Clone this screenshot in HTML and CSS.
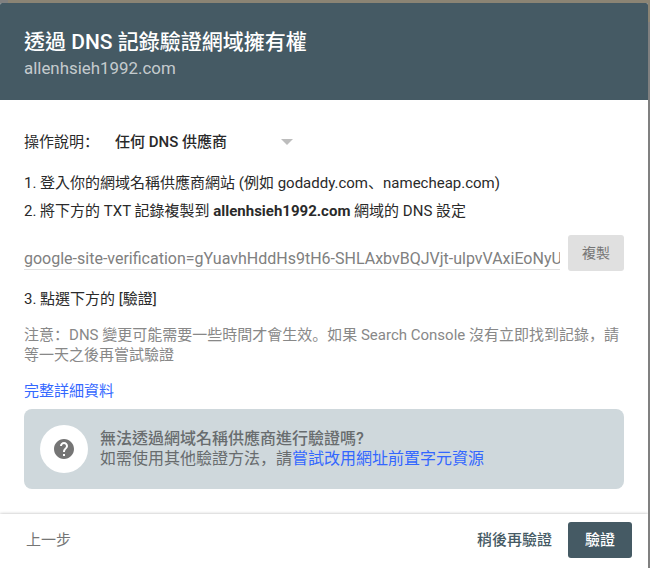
FILE: index.html
```
<!DOCTYPE html>
<html lang="zh-Hant">
<head>
<meta charset="utf-8">
<title>透過 DNS 記錄驗證網域擁有權</title>
<link rel="stylesheet" href="styles.css">
</head>
<body>
<main class="dialog">
  <header class="header">
    <h1 class="title">透過 DNS 記錄驗證網域擁有權</h1>
    <div class="domain">allenhsieh1992.com</div>
  </header>
  <section class="content">
    <div class="provider">
      <span class="provider-label">操作說明<span class="punct" lang="zh-Hans">：</span></span>
      <div class="select"><span>任何 DNS 供應商</span><span class="arrow"></span></div>
    </div>
    <p class="step">1. 登入你的網域名稱供應商網站 (例如 godaddy.com<span class="punct" lang="zh-Hans">、</span>namecheap.com)</p>
    <p class="step second">2. 將下方的 TXT 記錄複製到 <b>allenhsieh1992.com</b> 網域的 DNS 設定</p>
    <div class="record">
      <div class="record-value">google-site-verification=gYuavhHddHs9tH6-SHLAxbvBQJVjt-ulpvVAxiEoNyU</div>
      <button class="button copy">複製</button>
    </div>
    <p class="step third">3. 點選下方的 [驗證]</p>
    <p class="note">注意<span class="punct" lang="zh-Hans">：</span>DNS 變更可能需要一些時間才會生效<span class="punct" lang="zh-Hans">。</span>如果 Search Console 沒有立即找到記錄<span class="punct" lang="zh-Hans">，</span>請<br>等一天之後再嘗試驗證</p>
    <a class="details">完整詳細資料</a>
    <aside class="help">
      <div class="help-icon"><svg width="24" height="24" viewBox="0 0 24 24"><path fill="#757575" d="M12 2C6.48 2 2 6.48 2 12s4.48 10 10 10 10-4.480 10-10S17.520 2 12 2zm1 17h-2v-2h2v2zm2.070-7.750l-.9.920C13.450 12.900 13 13.500 13 15h-2v-.5c0-1.100.45-2.100 1.170-2.830l1.240-1.260c.37-.36.59-.86.59-1.410 0-1.100-.9-2-2-2s-2 .9-2 2H8c0-2.210 1.790-4 4-4s4 1.790 4 4c0 .88-.36 1.680-.93 2.250z"/></svg></div>
      <div class="help-text">
        <div class="help-title">無法透過網域名稱供應商進行驗證嗎?</div>
        <div>如需使用其他驗證方法<span class="punct" lang="zh-Hans">，</span>請<a>嘗試改用網址前置字元資源</a></div>
      </div>
    </aside>
  </section>
  <footer class="footer">
    <button class="button back">上一步</button>
    <button class="button later">稍後再驗證</button>
    <button class="button verify">驗證</button>
  </footer>
</main>
</body>
</html>
```
FILE: styles.css
```
* { box-sizing: border-box; }
body {
  margin: 0;
  height: 568px;
  overflow: hidden;
  padding-top: 3px;
  background: linear-gradient(#8b8474, #8b8474) 8px 0 / 650px 22px no-repeat, #808080;
  color: #2a2a2a;
  font: 15px/20px Roboto, "Noto Sans CJK TC", sans-serif;
}
h1, p { margin: 0; }
a { color: #3367ff; }
.punct { font-family: "Noto Sans CJK SC", sans-serif; line-height: 0; }
.dialog {
  display: flex;
  flex-direction: column;
  width: 648px;
  height: 565px;
  border-radius: 2px 2px 0 0;
  overflow: hidden;
  background: #fff;
}
.header {
  height: 97px;
  padding: 25px 24px 0;
  background: #455a64;
}
.title {
  font-size: 21px;
  font-weight: 500;
  line-height: 28px;
  color: #fff;
  white-space: nowrap;
}
.domain {
  font-size: 16.9px;
  line-height: 24px;
  color: rgba(255, 255, 255, .7);
}
.content {
  flex: 1;
  padding: 32px 24px 0;
}
.provider { display: flex; }
.provider-label { width: 91px; white-space: nowrap; }
.select {
  display: flex;
  align-items: center;
  justify-content: space-between;
  width: 178px;
  font-weight: 500;
}
.arrow {
  border: solid transparent;
  border-width: 6px 6px 0;
  border-top-color: #bdbdbd;
}
.step { margin-top: 21px; white-space: nowrap; }
.second { margin-top: 8px; }
.record {
  display: flex;
  margin-top: 14px;
  gap: 8px;
}
.record-value {
  width: 536px;
  height: 35px;
  padding-top: 14px;
  border-bottom: 1px solid #e0e0e0;
  overflow: hidden;
  white-space: nowrap;
  font-size: 16px;
  color: #808080;
}
.button {
  height: 36px;
  padding: 0;
  border: 0;
  border-radius: 3px;
  background: none;
  font: inherit;
}
.copy {
  width: 56px;
  background: #e0e0e0;
  color: #757575;
  font-size: 14px;
}
.third { margin-top: 18px; }
.note { margin-top: 16px; color: #888; white-space: nowrap; }
.details { display: block; margin-top: 16px; }
.help {
  display: flex;
  align-items: center;
  gap: 12px;
  height: 80px;
  margin-top: 8px;
  padding: 0 16px;
  border-radius: 8px;
  background: #cfd8dc;
  color: #686c6e;
  font-size: 16px;
}
.help-icon {
  display: grid;
  place-items: center;
  width: 48px;
  height: 48px;
  border-radius: 50%;
  background: #fff;
}
.help-title { font-weight: 500; }
.footer {
  display: flex;
  align-items: center;
  height: 54px;
  padding: 0 16px 2px 26px;
  box-shadow: 0 0 3px rgba(0, 0, 0, .3);
}
.back { margin-right: auto; color: #757575; }
.later { margin-right: 16px; color: #455a64; font-weight: 500; }
.verify {
  width: 64px;
  background: #455a64;
  color: #fff;
  font-weight: 500;
}
```
